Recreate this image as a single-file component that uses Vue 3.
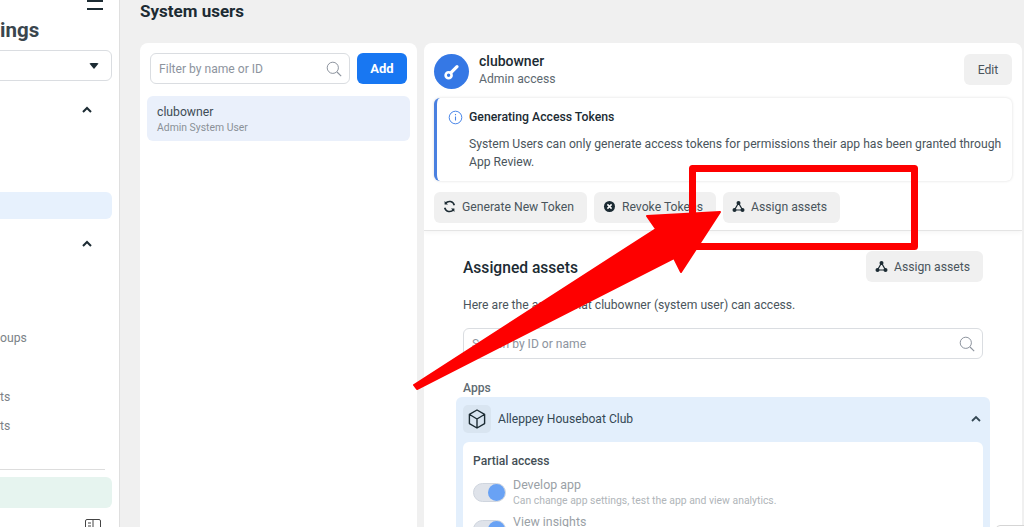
<template>
  <div class="page">
    <aside class="sidebar">
      <div class="menu-row">
        <span class="burger"><i></i><i></i></span>
      </div>
      <h2 class="side-title">ings</h2>
      <div class="side-select"><span class="caret"></span></div>
      <div class="side-chevron first"><svg width="12" height="8" viewBox="0 0 12 8"><path d="M2 6l4-4 4 4" fill="none" stroke="#1c2b33" stroke-width="2" /></svg></div>
      <div class="side-active"></div>
      <div class="side-chevron second"><svg width="12" height="8" viewBox="0 0 12 8"><path d="M2 6l4-4 4 4" fill="none" stroke="#1c2b33" stroke-width="2" /></svg></div>
      <div class="side-item groups">oups</div>
      <div class="side-item accounts">ts</div>
      <div class="side-item projects">ts</div>
      <div class="side-divider"></div>
      <div class="side-green"></div>
      <svg class="side-icon" width="16" height="16" viewBox="0 0 16 16"><rect x="0.5" y="0.5" width="15" height="14" rx="1.5" fill="none" stroke="#444" /><path d="M8 1v13M3 4h3M3 7h3M12 11l2-2v2z" stroke="#444" fill="none" /></svg>
    </aside>

    <main class="main">
      <h1 class="page-title">System users</h1>
      <div class="columns">
        <section class="card list-card">
          <div class="filter-row">
            <div class="input filter">
              <span class="placeholder">Filter by name or ID</span>
              <svg class="search" width="16" height="16" viewBox="0 0 16 16"><circle cx="6.8" cy="6.8" r="5.6" fill="none" stroke="#8d949e" stroke-width="1" /><path d="M11 11l4.2 4.2" stroke="#8d949e" stroke-width="1.1" /></svg>
            </div>
            <button class="add-btn">Add</button>
          </div>
          <div class="user-row">
            <div class="user-name">clubowner</div>
            <div class="user-role">Admin System User</div>
          </div>
        </section>

        <section class="card detail-card">
          <div class="detail-top">
            <header class="detail-head">
              <div class="avatar">
                <svg width="20" height="20" viewBox="0 0 20 20"><circle cx="6.6" cy="13.2" r="3" fill="none" stroke="#fff" stroke-width="2.6" /><path d="M9 10.6l6-6" stroke="#fff" stroke-width="3.2" stroke-linecap="round" /></svg>
              </div>
              <div class="head-text">
                <div class="head-name">clubowner</div>
                <div class="head-sub">Admin access</div>
              </div>
              <button class="grey-btn edit">Edit</button>
            </header>

            <div class="notice">
              <div class="notice-title">
                <svg width="15" height="15" viewBox="0 0 15 15"><circle cx="7.5" cy="7.5" r="6.3" fill="none" stroke="#4a86e8" stroke-width="1" /><path d="M7.5 6.6v4M7.5 4v1.2" stroke="#4a86e8" stroke-width="1.1" /></svg>
                <span>Generating Access Tokens</span>
              </div>
              <p class="notice-body">System Users can only generate access tokens for permissions their app has been granted through App Review.</p>
            </div>

            <div class="actions">
              <button class="grey-btn">
                <svg width="13" height="13" viewBox="0 0 13 13"><path d="M11.3 5.2A5 5 0 0 0 2.6 3.3M1.7 7.8a5 5 0 0 0 8.7 1.9" fill="none" stroke="#1c2b33" stroke-width="1.6" /><path d="M1.6 1v3.6h3.4zM11.4 12V8.4H8z" fill="#1c2b33" /></svg>
                Generate New Token
              </button>
              <button class="grey-btn">
                <svg width="13" height="13" viewBox="0 0 13 13"><circle cx="6.5" cy="6.5" r="5.5" fill="#1c2b33" /><path d="M4.4 4.4l4.2 4.2M8.6 4.4l-4.2 4.2" stroke="#fff" stroke-width="1.5" /></svg>
                Revoke Tokens
              </button>
              <button class="grey-btn">
                <svg width="13" height="13" viewBox="0 0 13 13" v-html="nodesIcon"></svg>
                Assign assets
              </button>
            </div>
          </div>

          <div class="assets">
            <div class="assets-head">
              <h3 class="assets-title">Assigned assets</h3>
              <button class="grey-btn">
                <svg width="13" height="13" viewBox="0 0 13 13" v-html="nodesIcon"></svg>
                Assign assets
              </button>
            </div>
            <p class="assets-desc">Here are the assets that clubowner (system user) can access.</p>
            <div class="input search-box">
              <span class="placeholder">Search by ID or name</span>
              <svg class="search" width="16" height="16" viewBox="0 0 16 16"><circle cx="6.8" cy="6.8" r="5.6" fill="none" stroke="#8d949e" stroke-width="1" /><path d="M11 11l4.2 4.2" stroke="#8d949e" stroke-width="1.1" /></svg>
            </div>
            <div class="apps-label">Apps</div>
            <div class="app-panel">
              <div class="app-row">
                <div class="app-icon">
                  <svg width="20" height="22" viewBox="0 0 20 22"><path d="M10 2l7.6 4.4v9.2L10 20l-7.6-4.4V6.4zM2.6 6.5L10 11l7.4-4.5M10 11v9" fill="none" stroke="#1c2b33" stroke-width="1.4" stroke-linejoin="round" /></svg>
                </div>
                <span class="app-name">Alleppey Houseboat Club</span>
                <svg class="app-chevron" width="12" height="8" viewBox="0 0 12 8"><path d="M2 6l4-4 4 4" fill="none" stroke="#344854" stroke-width="1.8" /></svg>
              </div>
              <div class="access-card">
                <div class="access-title">Partial access</div>
                <div v-for="p in permissions" :key="p.name" class="perm">
                  <span class="toggle"><span class="knob"></span></span>
                  <div>
                    <div class="perm-name">{{ p.name }}</div>
                    <div v-if="p.desc" class="perm-desc">{{ p.desc }}</div>
                  </div>
                </div>
              </div>
            </div>
          </div>
        </section>
      </div>
    </main>

    <!-- floating chip, cut by the bottom of the window -->
    <div class="float-chip"></div>

    <!-- red annotation drawn on top of the screenshot -->
    <svg class="annotation" width="1024" height="527" viewBox="0 0 1024 527">
      <rect x="692.5" y="168.5" width="222" height="78" fill="none" stroke="#fe0000" stroke-width="7" stroke-linejoin="round" />
      <path d="M414 385L656 229 647 216 720 212 681 272 674 258 417 389z" fill="#fe0000" stroke="#fe0000" stroke-width="2" stroke-linejoin="round" />
    </svg>
  </div>
</template>

<script setup>
const nodesIcon =
  '<path d="M6.5 3L2.5 10h8z" fill="none" stroke="#1c2b33" stroke-width="1.2"/><circle cx="6.5" cy="3" r="2" fill="#1c2b33"/><circle cx="2.5" cy="10" r="2" fill="#1c2b33"/><circle cx="10.5" cy="10" r="2" fill="#1c2b33"/>'

const permissions = [
  { name: 'Develop app', desc: 'Can change app settings, test the app and view analytics.' },
  { name: 'View insights', desc: '' }
]
</script>

<style>
html,
body {
  margin: 0;
  overflow: hidden;
}
</style>

<style scoped>
.page {
  position: relative;
  display: flex;
  width: 1024px;
  height: 527px;
  overflow: hidden;
  background: #f0f0f0;
  font-family: Roboto, "Liberation Sans", sans-serif;
  color: #1c2b33;
}

.sidebar {
  flex: none;
  box-sizing: border-box;
  width: 120px;
  padding-right: 7px;
  background: #fff;
  border-right: 1px solid #dfdfdf;
  display: flex;
  flex-direction: column;
}

.sidebar > * {
  flex: none;
}

.menu-row {
  display: flex;
  justify-content: flex-end;
  padding-right: 9px;
}

.burger {
  width: 16px;
}

.burger i {
  display: block;
  height: 2px;
  background: #1c2b33;
  margin-bottom: 6px;
}

.side-title {
  margin: 0;
  font-size: 20.5px;
  line-height: 28px;
  font-weight: 700;
  color: #3a464e;
}

.side-select {
  box-sizing: border-box;
  height: 31px;
  margin: 6px 0 0 -10px;
  border: 1px solid #dadde1;
  border-radius: 6px;
  display: flex;
  align-items: center;
  justify-content: flex-end;
  padding-right: 12px;
}

.caret {
  border: 5px solid transparent;
  border-top: 6px solid #1c2b33;
  border-bottom: 0;
  border-radius: 2px;
}

.side-chevron {
  display: flex;
  justify-content: flex-end;
  padding-right: 19px;
  height: 8px;
}

.side-chevron.first {
  margin-top: 25px;
}

.side-chevron.second {
  margin-top: 21px;
}

.side-active {
  height: 27px;
  margin-top: 78px;
  background: #e7f1fd;
  border-radius: 0 6px 6px 0;
}

.side-item {
  font-size: 12.2px;
  line-height: 18px;
  color: #7b8287;
}

.groups {
  margin-top: 81px;
}

.accounts {
  margin-top: 41px;
}

.projects {
  margin-top: 11px;
}

.side-divider {
  height: 1px;
  margin: 34px 7px 0 0;
  background: #dddddd;
}

.side-green {
  height: 31px;
  margin-top: 7px;
  background: #e6f4ef;
  border-radius: 0 6px 6px 0;
}

.side-icon {
  margin: 11px 0 0 85px;
}

.main {
  flex: 1;
  min-width: 0;
  padding-left: 20px;
}

.page-title {
  margin: 0;
  height: 43px;
  font-size: 17px;
  line-height: 23px;
  font-weight: 700;
  color: #1c2b33;
}

.columns {
  display: flex;
  gap: 7px;
  height: 500px;
}

.card {
  background: #fff;
  border-radius: 8px;
}

.list-card {
  flex: none;
  box-sizing: border-box;
  width: 277px;
  padding: 10px 7px;
}

.filter-row {
  display: flex;
  gap: 7px;
  padding: 0 3px;
}

.input {
  box-sizing: border-box;
  display: flex;
  align-items: center;
  justify-content: space-between;
  background: #fff;
  border: 1px solid #dadde1;
  border-radius: 6px;
  padding: 0 7px 0 8px;
}

.filter {
  width: 200px;
  height: 31px;
}

.placeholder {
  font-size: 12.1px;
  color: #8d949e;
}

.add-btn {
  width: 50px;
  height: 31px;
  border: 0;
  border-radius: 6px;
  background: #1877f2;
  color: #fff;
  font: 700 13px Roboto, "Liberation Sans", sans-serif;
}

.user-row {
  box-sizing: border-box;
  height: 45px;
  margin-top: 12px;
  padding: 9px 10px 0;
  background: #eaf0fb;
  border-radius: 6px;
}

.user-name {
  font-size: 12.2px;
  line-height: 15px;
  color: #3f4c56;
}

.user-role {
  margin-top: 1px;
  font-size: 10.4px;
  line-height: 13px;
  color: #8a9197;
}

.detail-card {
  flex: none;
  width: 598px;
  overflow: hidden;
}

.detail-top {
  box-sizing: border-box;
  height: 188px;
  padding: 11px 0 0 10px;
  border-bottom: 1px solid #e4e4e4;
  box-shadow: 0 2px 4px rgba(0, 0, 0, 0.04);
}

.detail-head {
  display: flex;
  align-items: flex-start;
  height: 44px;
  width: 578px;
}

.avatar {
  flex: none;
  width: 35px;
  height: 35px;
  border-radius: 50%;
  background: #3578e5;
  display: flex;
  align-items: center;
  justify-content: center;
}

.head-text {
  flex: 1;
  margin: -1px 0 0 10px;
}

.head-name {
  font-size: 14px;
  line-height: 16px;
  font-weight: 500;
  color: #1c2b33;
}

.head-sub {
  margin-top: 2px;
  font-size: 12.2px;
  line-height: 16px;
  color: #5d6970;
}

.grey-btn {
  display: inline-flex;
  align-items: center;
  gap: 6px;
  height: 31px;
  padding: 0 13px 0 9px;
  border: 0;
  border-radius: 6px;
  background: #f0f0f0;
  color: #4a555c;
  font: 400 12.2px Roboto, "Liberation Sans", sans-serif;
}

.edit {
  width: 48px;
  padding: 0;
  justify-content: center;
}

.notice {
  box-sizing: border-box;
  width: 578px;
  height: 83px;
  padding: 11px 8px 0 11px;
  border-left: 3px solid #4a80e0;
  border-radius: 6px;
  background: #fff;
  box-shadow: 0 0 3px rgba(0, 0, 0, 0.14);
}

.notice-title {
  display: flex;
  align-items: center;
  gap: 6px;
  font-size: 12.25px;
  line-height: 16px;
  font-weight: 500;
  color: #1c2b33;
}

.notice-body {
  margin: 10px 0 0 21px;
  font-size: 12.15px;
  line-height: 18px;
  color: #4a555c;
}

.actions {
  display: flex;
  gap: 7px;
  margin-top: 11px;
}

.actions .grey-btn {
  padding-bottom: 2px;
}

.assets {
  box-sizing: border-box;
  width: 594px;
  padding: 20px 35px 0 39px;
}

.assets-head {
  display: flex;
  align-items: center;
  justify-content: space-between;
}

.assets-title {
  margin: 2px 0 0;
  font-size: 15.6px;
  font-weight: 500;
  color: #1c2b33;
}

.assets-desc {
  margin: 15px 0 0;
  font-size: 12.15px;
  line-height: 16px;
  color: #4a555c;
}

.search-box {
  height: 31px;
  margin-top: 15px;
}

.apps-label {
  margin-top: 21px;
  font-size: 12.1px;
  line-height: 16px;
  font-weight: 500;
  color: #606b72;
}

.app-panel {
  margin: 1px -7px 0;
  padding: 8px 7px;
  background: #e3effc;
  border-radius: 6px;
}

.app-row {
  display: flex;
  align-items: center;
  height: 28px;
}

.app-icon {
  width: 28px;
  height: 28px;
  border-radius: 5px;
  background: #d9e5f1;
  display: flex;
  align-items: center;
  justify-content: center;
}

.app-name {
  flex: 1;
  margin: -1px 0 0 7px;
  font-size: 12.1px;
  color: #344854;
}

.app-chevron {
  margin-right: 1px;
}

.access-card {
  margin-top: 9px;
  padding: 11px 10px 10px;
  background: #fff;
  border-radius: 6px;
}

.access-title {
  font-size: 12.1px;
  line-height: 16px;
  font-weight: 500;
  color: #444f56;
}

.perm {
  display: flex;
  gap: 7px;
  margin-top: 8px;
  height: 29px;
}

.toggle {
  flex: none;
  box-sizing: border-box;
  width: 33px;
  height: 19px;
  margin-top: 6px;
  display: flex;
  justify-content: flex-end;
  align-items: center;
  background: #dfe3ea;
  border: 1px solid #cfd5de;
  border-radius: 10px;
}

.knob {
  width: 17px;
  height: 17px;
  border-radius: 50%;
  background: #69a2f4;
}

.perm-name {
  font-size: 12.4px;
  line-height: 16px;
  color: #9aa1a6;
}

.perm-desc {
  margin-top: 1px;
  font-size: 10.4px;
  line-height: 13px;
  color: #b0b5b9;
}

.float-chip {
  position: absolute;
  left: 996px;
  top: 525px;
  width: 40px;
  height: 30px;
  box-sizing: border-box;
  background: #fff;
  border: 1px solid #d5d5d5;
  border-radius: 4px;
}

.annotation {
  position: absolute;
  left: 0;
  top: 0;
  pointer-events: none;
}
</style>
